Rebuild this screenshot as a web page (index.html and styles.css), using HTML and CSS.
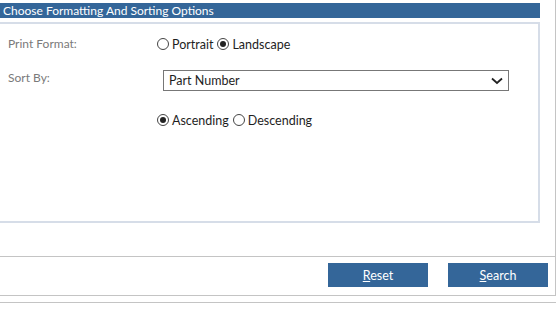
FILE: index.html
```html
<!DOCTYPE html>
<html>
<head>
<meta charset="utf-8">
<link rel="stylesheet" href="styles.css">
</head>
<body>
<div class="page">
  <div class="top">
    <div class="title">Choose Formatting And Sorting Options</div>
    <div class="panel">
      <div class="row row-format">
        <div class="label">Print Format:</div>
        <div class="control radios">
          <label class="opt"><span class="radio"></span>Portrait</label>
          <label class="opt"><span class="radio checked"></span>Landscape</label>
        </div>
      </div>
      <div class="row row-sort">
        <div class="label">Sort By:</div>
        <div class="control">
          <div class="select">
            <span class="select-text">Part Number</span>
            <svg class="chev" width="12" height="8" viewBox="0 0 12 8"><path d="M1 1.5 L6 6 L11 1.5" fill="none" stroke="#222" stroke-width="1.8"/></svg>
          </div>
        </div>
      </div>
      <div class="row row-order">
        <div class="label"></div>
        <div class="control radios">
          <label class="opt"><span class="radio checked"></span>Ascending</label>
          <label class="opt"><span class="radio"></span>Descending</label>
        </div>
      </div>
    </div>
  </div>
  <div class="actions">
    <button class="btn"><u>R</u>eset</button>
    <button class="btn"><u>S</u>earch</button>
  </div>
</div>
<div class="below"></div>
</body>
</html>
```
FILE: styles.css
```css
html, body {
  margin: 0;
  padding: 0;
  background: #fff;
}
body {
  font-family: Lato, "Liberation Sans", sans-serif;
  font-size: 12.5px;
  color: #1e1e1e;
}
.page {
  width: 555px;
  border-right: 1px solid #c4c4c4;
  border-bottom: 1px solid #c4c4c4;
}
.top {
  padding-top: 3px;
  padding-right: 15px;
}
.title {
  height: 15px;
  line-height: 16px;
  background: #346699;
  color: #fff;
  padding-left: 3px;
  font-size: 12px;
}
.panel {
  margin-top: 4px;
  height: 197px;
  border: 2px solid #d6dde8;
  border-left: 0;
}
.row {
  display: grid;
  grid-template-columns: 157px 1fr;
}
.label {
  padding-left: 8px;
  color: #7a7a7a;
  font-size: 12px;
  line-height: 16px;
}
.row-format {
  margin-top: 10px;
  align-items: center;
  height: 20px;
}
.row-sort {
  margin-top: 16px;
}
.row-order {
  margin-top: 19px;
  align-items: center;
  height: 20px;
}
.radios {
  display: flex;
  align-items: center;
  gap: 4px;
}
.opt {
  display: flex;
  align-items: center;
}
.radio {
  box-sizing: border-box;
  width: 12px;
  height: 12px;
  border: 1px solid #444;
  border-radius: 50%;
  margin-right: 3px;
  display: flex;
  align-items: center;
  justify-content: center;
  background: #fff;
}
.radio.checked::after {
  content: "";
  width: 6px;
  height: 6px;
  border-radius: 50%;
  background: #222;
}
.select {
  box-sizing: border-box;
  margin-left: 6px;
  width: 346px;
  height: 21px;
  border: 1px solid #777;
  display: flex;
  align-items: center;
  justify-content: space-between;
  padding: 0 5px 0 5px;
}
.chev {
  display: block;
}
.actions {
  margin-top: 33px;
  border-top: 1px solid #c4c4c4;
  padding: 6px 7px 8px 0;
  display: flex;
  justify-content: flex-end;
  gap: 20px;
}
.btn {
  width: 100px;
  height: 24px;
  border: 0;
  margin: 0;
  padding: 0;
  background: #346699;
  color: #fff;
  font-family: Lato, "Liberation Sans", sans-serif;
  font-size: 12.5px;
}
.below {
  margin-top: 6px;
  width: 556px;
  border-top: 1px solid #c4c4c4;
}
```
